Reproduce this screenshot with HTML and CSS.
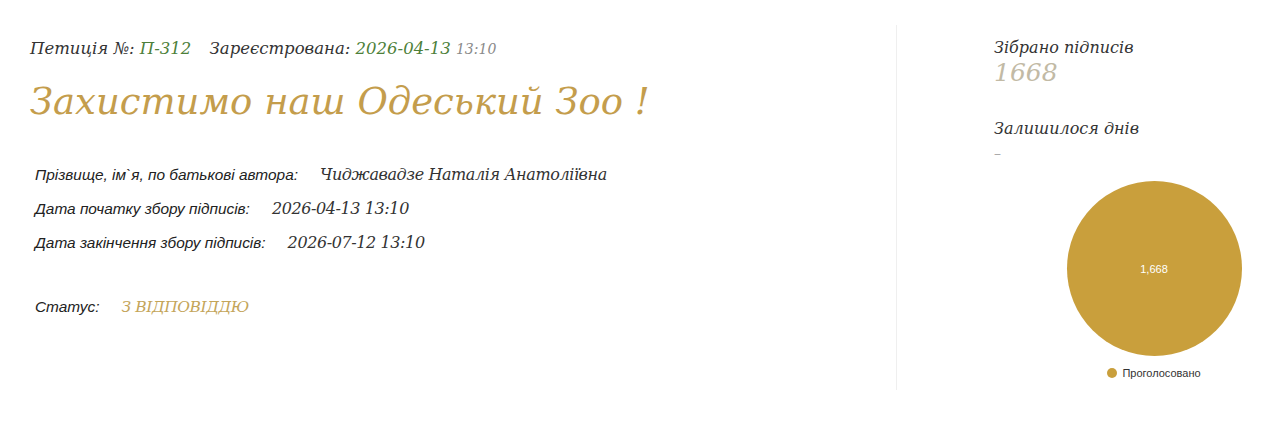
FILE: index.html
```html
<!DOCTYPE html>
<html lang="uk">
<head>
<meta charset="utf-8">
<title>Петиція П-312</title>
<link rel="stylesheet" href="styles.css">
</head>
<body>
<div class="page">
  <section class="main">
    <div class="meta">
      <span class="dark">Петиція №:</span> <span class="green">П-312</span>
      <span class="reg"><span class="dark">Зареєстрована:</span> <span class="green">2026-04-13</span> <span class="time">13:10</span></span>
    </div>
    <h1 class="title">Захистимо наш Одеський Зоо !</h1>
    <div class="info">
      <div class="row"><span class="label">Прізвище, ім`я, по батькові автора:</span><span class="value">Чиджавадзе Наталія Анатоліївна</span></div>
      <div class="row"><span class="label">Дата початку збору підписів:</span><span class="value">2026-04-13 13:10</span></div>
      <div class="row"><span class="label">Дата закінчення збору підписів:</span><span class="value">2026-07-12 13:10</span></div>
    </div>
    <div class="row status"><span class="label">Статус:</span><span class="value gold">З ВІДПОВІДДЮ</span></div>
  </section>
  <aside class="side">
    <div class="stat-label">Зібрано підписів</div>
    <div class="stat-num">1668</div>
    <div class="stat-label days">Залишилося днів</div>
    <div class="stat-dash">–</div>
    <div class="chart">
      <div class="pie"><span>1,668</span></div>
      <div class="legend"><span class="dot"></span>Проголосовано</div>
    </div>
  </aside>
</div>
</body>
</html>
```
FILE: styles.css
```css
html, body { margin: 0; padding: 0; background: #fff; }
body { font-family: "DejaVu Serif", serif; color: #333; }
.page { display: flex; padding: 25px 0 0 30px; height: 415px; box-sizing: border-box; }
.main { width: 867px; border-right: 1px solid #efefef; height: 365px; box-sizing: border-box; }
.meta { font-style: italic; font-size: 16.5px; line-height: 20px; margin-top: 14px; }
.dark { color: #333; }
.green { color: #4d7f3a; }
.time { color: #8a8a8a; font-size: 14px; }
.reg { margin-left: 13px; }
.title { font-style: italic; font-weight: normal; color: #c49d4c; font-size: 37px; line-height: 44px; margin: 21px 0 0 0; }
.info { margin-top: 34px; padding-left: 5px; }
.row { display: flex; align-items: baseline; height: 34px; line-height: 34px; }
.label { font-family: "Liberation Sans", Arial, sans-serif; font-style: italic; font-size: 15.4px; color: #222; margin-right: 22px; }
.value { font-style: italic; font-size: 16px; color: #333; letter-spacing: -0.4px; }
.status { margin-top: 30px; padding-left: 5px; }
.gold { color: #c4a55a; text-transform: uppercase; font-size: 15.5px; }
.side { padding-left: 97px; display: flex; flex-direction: column; }
.stat-label { font-style: italic; font-size: 16px; color: #333; line-height: 20px; margin-top: 13px; }
.stat-num { font-style: italic; font-size: 25px; color: #c2baa5; line-height: 30px; }
.days { margin-top: 31px; }
.stat-dash { color: #aaa; font-size: 14px; line-height: 20px; margin-top: 4px; }
.chart { display: flex; flex-direction: column; align-items: center; margin-left: 72px; width: 176px; margin-top: 18px; }
.pie { width: 175px; height: 175px; border-radius: 50%; background: #c99f3c; display: flex; align-items: center; justify-content: center; }
.pie span { color: #fff; font-family: "Liberation Sans", Arial, sans-serif; font-size: 11px; }
.legend { margin-top: 11px; font-family: "Liberation Sans", Arial, sans-serif; font-size: 11px; color: #333; display: flex; align-items: center; gap: 5px; }
.dot { width: 10px; height: 10px; border-radius: 50%; background: #c99f3c; }
```
